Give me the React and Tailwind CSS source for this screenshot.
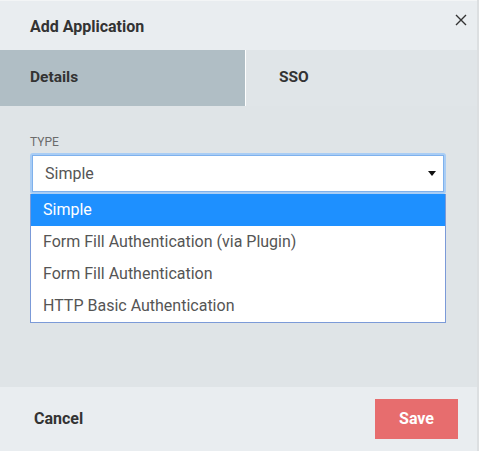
import { useState } from 'react'

const OPTIONS = [
  'Simple',
  'Form Fill Authentication (via Plugin)',
  'Form Fill Authentication',
  'HTTP Basic Authentication',
]

export default function App() {
  const [tab, setTab] = useState('details')
  const [value, setValue] = useState('Simple')

  return (
    <div className="w-[479px] h-[451px] bg-[#dcdfe1] font-['Roboto',sans-serif] overflow-hidden">
      <div className="w-[477px] h-[451px] flex flex-col bg-[#dfe4e7] border-t border-[#f3f5f6]">
        {/* Header */}
        <div className="h-[49px] shrink-0 bg-[#e9edf0] flex items-center justify-between pl-[30px] pr-[4px]">
          <h1 className="text-[16px] font-bold text-[#333] mt-[3px]">Add Application</h1>
          <button className="w-[24px] h-[24px] flex items-center justify-center text-[#333] -mt-[12px]">
            <svg width="12" height="12" viewBox="0 0 12 12" fill="none" stroke="currentColor" strokeWidth="1.4">
              <path d="M1 1l10 10M11 1L1 11" />
            </svg>
          </button>
        </div>

        {/* Tabs */}
        <div className="h-[56px] shrink-0 flex">
          <button
            onClick={() => setTab('details')}
            className={`w-[246px] text-left pl-[30px] text-[15.5px] font-bold text-[#333] border-r border-white ${tab === 'details' ? 'bg-[#b0bec5]' : 'bg-[#e0e5e8]'}`}
          >
            Details
          </button>
          <button
            onClick={() => setTab('sso')}
            className={`flex-1 text-left pl-[33px] text-[15.5px] font-bold text-[#333] ${tab === 'sso' ? 'bg-[#b0bec5]' : 'bg-[#e0e5e8]'}`}
          >
            SSO
          </button>
        </div>

        {/* Body */}
        <div className="flex-1 px-[30px] pt-[29px]">
          <label className="block text-[12px] text-[#6b6b6b] leading-[14px] mb-[4px]">TYPE</label>
          <div className="w-[416px]">
            <div className="h-[41px] rounded-[3px] bg-[#a9cdf5] p-[2px]">
              <div className="h-full bg-white border border-[#7fb1ec] flex items-center justify-between pl-[12px] pr-[6px]">
                <span className="text-[16px] text-[#555]">{value}</span>
                <svg width="8" height="5" viewBox="0 0 8 5" className="mr-[1px]">
                  <path d="M0 0h8L4 5z" fill="#111" />
                </svg>
              </div>
            </div>
            <ul className="bg-white border border-[#7b9ad8] border-t-0">
              {OPTIONS.map((opt) => (
                <li
                  key={opt}
                  onClick={() => setValue(opt)}
                  className={`h-[32px] flex items-center pl-[12px] text-[16px] ${opt === value ? 'bg-[#1e90ff] text-white' : 'text-[#555]'}`}
                >
                  {opt}
                </li>
              ))}
            </ul>
          </div>
        </div>

        {/* Footer */}
        <div className="h-[64px] shrink-0 bg-[#e9edf0] flex items-center justify-between pl-[34px] pr-[19px]">
          <button className="text-[16px] font-bold text-[#333]">Cancel</button>
          <button className="w-[83px] h-[40px] bg-[#e76d6e] text-white text-[16px] font-bold">Save</button>
        </div>
      </div>
    </div>
  )
}
